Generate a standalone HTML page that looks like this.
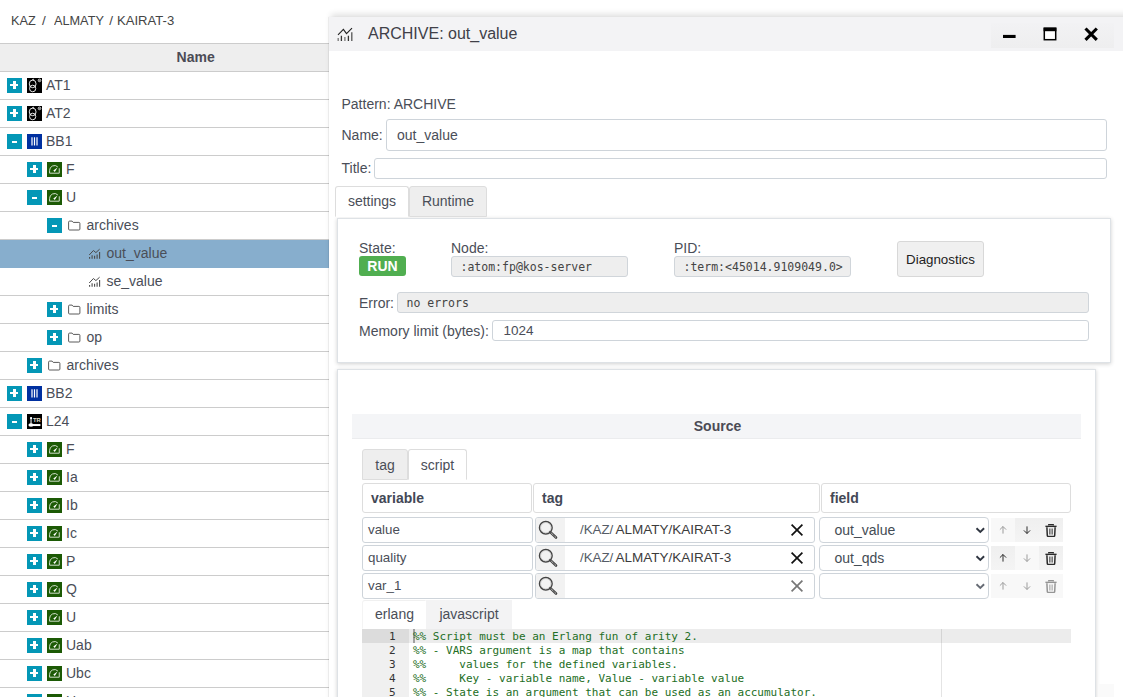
<!DOCTYPE html>
<html lang="en">
<head>
<meta charset="utf-8">
<title>ARCHIVE: out_value</title>
<style>
*{box-sizing:border-box;margin:0;padding:0}
html,body{width:1123px;height:697px;overflow:hidden;background:#fff}
body{font-family:"Liberation Sans",sans-serif;font-size:14px;color:#4a4e58;position:relative}
.abs{position:absolute}
/* ---------- left tree ---------- */
#crumbs{left:0;top:12px;height:18px;line-height:18px;font-size:13.5px;color:#444;white-space:pre}
#crumbs span{position:absolute;top:0;transform-origin:0 50%;display:block}
#thead{left:0;top:43px;width:329px;height:29px;border-top:1px solid #ccc;border-bottom:1px solid #ccc;background:#eee;font-weight:bold;line-height:27px;color:#4b4b55}
#thead span{position:absolute;left:176.6px}
#tree{left:0;top:72px;width:329px}
.row{position:relative;height:28px;border-bottom:1px solid #ccc;line-height:27px;white-space:nowrap}
.row.sel{background:#87aecd;border-bottom-color:#87aecd}
.row .pm{position:absolute;top:6px;width:15px;height:15px;background:#0497b6}
.row .pm:before{content:"";position:absolute;background:#fff}
.row .pm:after{content:"";position:absolute;background:#fff}
.row .pm.plus:before{left:3.1px;top:6px;width:8.2px;height:2.3px}
.row .pm.plus:after{left:6px;top:3px;width:2.6px;height:8.2px}
.row .pm.minus:before{left:5.1px;top:6.9px;width:4.7px;height:2.1px}
.row .ic{position:absolute;top:6px;width:15px;height:15px}
.row .tx{position:absolute;top:0}
/* ---------- window ---------- */
#win{left:329px;top:17px;width:800px;height:700px;background:#fff;box-shadow:-1.5px 0 1px rgba(0,0,0,.11),2px -3px 6px rgba(0,0,0,.12)}
#wc{left:-329px;top:-17px;width:0;height:0}
#tbar{left:329px;top:17px;width:800px;height:34px;background:#f3f3f5}
#ttl{left:368px;top:24px;font-size:16px;line-height:20px;color:#404048;white-space:nowrap}
#tbtn{left:991px;top:23px;width:123px;height:25px;background:linear-gradient(#f2f2f4,#eeeeef)}
.lab{line-height:18px;white-space:nowrap}
.inp{border:1px solid #ced4da;border-radius:3px;background:#fff;white-space:nowrap;overflow:hidden}
.inp.ro{background:#eee;border-color:#d0d5da;color:#444}
.mono{font-family:"DejaVu Sans Mono","Liberation Mono",monospace}
.tab{height:31px;line-height:28px;text-align:center;border:1px solid #ddd;border-radius:3px 3px 0 0}
.tab.off{background:#eee;border-color:#ddd}
.tab.on{background:#fff;border-bottom-color:#fff}
.panel{background:#fff;border:1px solid #dee2e6;box-shadow:0 1px 4px rgba(0,0,0,.19)}
.hcell{border:1px solid #ddd;border-radius:3px;font-weight:bold;line-height:28px;padding-left:8px;height:30px;color:#434856}
.sbtn{width:23px;height:22px;background:#f2f2f2}
.sbtn.hl{background:#ececec}
.cl{font-size:11px;line-height:14px;height:14px}
.tagtx{font-size:13.5px;color:#3c3c3c;white-space:pre}
</style>
</head>
<body>
<div id="crumbs" class="abs"><span style="left:11px;transform:scaleX(.942)">KAZ</span><span style="left:42px">/</span><span style="left:53.5px;transform:scaleX(.941)">ALMATY</span><span style="left:109.3px">/</span><span style="left:117px;transform:scaleX(.969)">KAIRAT-3</span></div>
<div id="thead" class="abs"><span>Name</span></div>
<div id="tree" class="abs">
<div class="row"><span class="pm plus" style="left:7px"></span><svg class="ic" style="left:27px" viewBox="0 0 15 15"><rect width="15" height="15" fill="#000"/><g fill="none" stroke="#fff" stroke-width="0.9"><ellipse cx="5.65" cy="5.9" rx="3.4" ry="3.8"/><ellipse cx="5.65" cy="10.5" rx="3.1" ry="3.3"/><path d="M5 2.2L6.3 1L6.9 2.2" stroke-width="0.7"/><circle cx="12.5" cy="2.4" r="1.3" stroke-width="0.8"/><circle cx="12.5" cy="2.4" r="0.3" stroke-width="0.6"/></g></svg><span class="tx" style="left:46px">AT1</span></div>
<div class="row"><span class="pm plus" style="left:7px"></span><svg class="ic" style="left:27px" viewBox="0 0 15 15"><rect width="15" height="15" fill="#000"/><g fill="none" stroke="#fff" stroke-width="0.9"><ellipse cx="5.65" cy="5.9" rx="3.4" ry="3.8"/><ellipse cx="5.65" cy="10.5" rx="3.1" ry="3.3"/><path d="M5 2.2L6.3 1L6.9 2.2" stroke-width="0.7"/><circle cx="12.5" cy="2.4" r="1.3" stroke-width="0.8"/><circle cx="12.5" cy="2.4" r="0.3" stroke-width="0.6"/></g></svg><span class="tx" style="left:46px">AT2</span></div>
<div class="row"><span class="pm minus" style="left:7px"></span><svg class="ic" style="left:27px" viewBox="0 0 15 15"><rect width="15" height="15" fill="#0030a0"/><g stroke="#fff" stroke-width="1.2"><path d="M5 3.2v8.3M7.5 3.2v8.3M10 3.2v8.3"/></g></svg><span class="tx" style="left:46px">BB1</span></div>
<div class="row"><span class="pm plus" style="left:27px"></span><svg class="ic" style="left:47px" viewBox="0 0 15 15"><rect width="15" height="15" fill="#1c5a05"/><path d="M2.6 11.2V8.4A4.85 4.85 0 0 1 10.8 4.9M12.25 6.3V11.2H2.6" fill="none" stroke="#dbe6d6" stroke-width="0.95"/><path d="M6.3 8.5L7.8 9.9L10.5 5.6z" fill="#fff"/></svg><span class="tx" style="left:66px">F</span></div>
<div class="row"><span class="pm minus" style="left:27px"></span><svg class="ic" style="left:47px" viewBox="0 0 15 15"><rect width="15" height="15" fill="#1c5a05"/><path d="M2.6 11.2V8.4A4.85 4.85 0 0 1 10.8 4.9M12.25 6.3V11.2H2.6" fill="none" stroke="#dbe6d6" stroke-width="0.95"/><path d="M6.3 8.5L7.8 9.9L10.5 5.6z" fill="#fff"/></svg><span class="tx" style="left:66px">U</span></div>
<div class="row"><span class="pm minus" style="left:47px"></span><svg class="ic" style="left:67px" viewBox="0 0 15 15"><path d="M1.6 4.1q0-1 1-1h2.5l1.1 1.3h5.7q1 0 1 1v5.6q0 1-1 1H2.6q-1 0-1-1z" fill="none" stroke="#5a5a5a" stroke-width="1"/></svg><span class="tx" style="left:86.5px">archives</span></div>
<div class="row sel"><svg class="ic" style="left:87px;" viewBox="0 0 15 15"><g fill="none" stroke="#4a4a4a"><path d="M2.2 9L6.4 4.5L8.9 6.6L12.6 3.2" stroke-width="1"/><path d="M2.6 11v1.8M5.1 9.2v3.6M7.6 9.8v3M10.1 8.5v4.3M12.6 6v6.8" stroke-width="1.1"/></g></svg><span class="tx" style="left:106.5px">out_value</span></div>
<div class="row"><svg class="ic" style="left:87px;" viewBox="0 0 15 15"><g fill="none" stroke="#4a4a4a"><path d="M2.2 9L6.4 4.5L8.9 6.6L12.6 3.2" stroke-width="1"/><path d="M2.6 11v1.8M5.1 9.2v3.6M7.6 9.8v3M10.1 8.5v4.3M12.6 6v6.8" stroke-width="1.1"/></g></svg><span class="tx" style="left:106.5px">se_value</span></div>
<div class="row"><span class="pm plus" style="left:47px"></span><svg class="ic" style="left:67px" viewBox="0 0 15 15"><path d="M1.6 4.1q0-1 1-1h2.5l1.1 1.3h5.7q1 0 1 1v5.6q0 1-1 1H2.6q-1 0-1-1z" fill="none" stroke="#5a5a5a" stroke-width="1"/></svg><span class="tx" style="left:86.5px">limits</span></div>
<div class="row"><span class="pm plus" style="left:47px"></span><svg class="ic" style="left:67px" viewBox="0 0 15 15"><path d="M1.6 4.1q0-1 1-1h2.5l1.1 1.3h5.7q1 0 1 1v5.6q0 1-1 1H2.6q-1 0-1-1z" fill="none" stroke="#5a5a5a" stroke-width="1"/></svg><span class="tx" style="left:86.5px">op</span></div>
<div class="row"><span class="pm plus" style="left:27px"></span><svg class="ic" style="left:47px" viewBox="0 0 15 15"><path d="M1.6 4.1q0-1 1-1h2.5l1.1 1.3h5.7q1 0 1 1v5.6q0 1-1 1H2.6q-1 0-1-1z" fill="none" stroke="#5a5a5a" stroke-width="1"/></svg><span class="tx" style="left:66.5px">archives</span></div>
<div class="row"><span class="pm plus" style="left:7px"></span><svg class="ic" style="left:27px" viewBox="0 0 15 15"><rect width="15" height="15" fill="#0030a0"/><g stroke="#fff" stroke-width="1.2"><path d="M5 3.2v8.3M7.5 3.2v8.3M10 3.2v8.3"/></g></svg><span class="tx" style="left:46px">BB2</span></div>
<div class="row"><span class="pm minus" style="left:7px"></span><svg class="ic" style="left:27px" viewBox="0 0 15 15"><rect width="15" height="15" fill="#000"/><path d="M4.05 4.2v6" stroke="#bbb" stroke-width="1.4" fill="none"/><rect x="3.1" y="3.1" width="1.9" height="1.9" fill="#fff"/><path d="M2.2 11.05H13.4" stroke="#fff" stroke-width="2" fill="none"/><ellipse cx="4" cy="11.1" rx="2.6" ry="1.75" fill="#fff"/><text x="5.9" y="8.2" font-family="Liberation Sans,sans-serif" font-weight="bold" font-size="5.8" fill="#e8e0d0">TR</text></svg><span class="tx" style="left:46px">L24</span></div>
<div class="row"><span class="pm plus" style="left:27px"></span><svg class="ic" style="left:47px" viewBox="0 0 15 15"><rect width="15" height="15" fill="#1c5a05"/><path d="M2.6 11.2V8.4A4.85 4.85 0 0 1 10.8 4.9M12.25 6.3V11.2H2.6" fill="none" stroke="#dbe6d6" stroke-width="0.95"/><path d="M6.3 8.5L7.8 9.9L10.5 5.6z" fill="#fff"/></svg><span class="tx" style="left:66px">F</span></div>
<div class="row"><span class="pm plus" style="left:27px"></span><svg class="ic" style="left:47px" viewBox="0 0 15 15"><rect width="15" height="15" fill="#1c5a05"/><path d="M2.6 11.2V8.4A4.85 4.85 0 0 1 10.8 4.9M12.25 6.3V11.2H2.6" fill="none" stroke="#dbe6d6" stroke-width="0.95"/><path d="M6.3 8.5L7.8 9.9L10.5 5.6z" fill="#fff"/></svg><span class="tx" style="left:66px">Ia</span></div>
<div class="row"><span class="pm plus" style="left:27px"></span><svg class="ic" style="left:47px" viewBox="0 0 15 15"><rect width="15" height="15" fill="#1c5a05"/><path d="M2.6 11.2V8.4A4.85 4.85 0 0 1 10.8 4.9M12.25 6.3V11.2H2.6" fill="none" stroke="#dbe6d6" stroke-width="0.95"/><path d="M6.3 8.5L7.8 9.9L10.5 5.6z" fill="#fff"/></svg><span class="tx" style="left:66px">Ib</span></div>
<div class="row"><span class="pm plus" style="left:27px"></span><svg class="ic" style="left:47px" viewBox="0 0 15 15"><rect width="15" height="15" fill="#1c5a05"/><path d="M2.6 11.2V8.4A4.85 4.85 0 0 1 10.8 4.9M12.25 6.3V11.2H2.6" fill="none" stroke="#dbe6d6" stroke-width="0.95"/><path d="M6.3 8.5L7.8 9.9L10.5 5.6z" fill="#fff"/></svg><span class="tx" style="left:66px">Ic</span></div>
<div class="row"><span class="pm plus" style="left:27px"></span><svg class="ic" style="left:47px" viewBox="0 0 15 15"><rect width="15" height="15" fill="#1c5a05"/><path d="M2.6 11.2V8.4A4.85 4.85 0 0 1 10.8 4.9M12.25 6.3V11.2H2.6" fill="none" stroke="#dbe6d6" stroke-width="0.95"/><path d="M6.3 8.5L7.8 9.9L10.5 5.6z" fill="#fff"/></svg><span class="tx" style="left:66px">P</span></div>
<div class="row"><span class="pm plus" style="left:27px"></span><svg class="ic" style="left:47px" viewBox="0 0 15 15"><rect width="15" height="15" fill="#1c5a05"/><path d="M2.6 11.2V8.4A4.85 4.85 0 0 1 10.8 4.9M12.25 6.3V11.2H2.6" fill="none" stroke="#dbe6d6" stroke-width="0.95"/><path d="M6.3 8.5L7.8 9.9L10.5 5.6z" fill="#fff"/></svg><span class="tx" style="left:66px">Q</span></div>
<div class="row"><span class="pm plus" style="left:27px"></span><svg class="ic" style="left:47px" viewBox="0 0 15 15"><rect width="15" height="15" fill="#1c5a05"/><path d="M2.6 11.2V8.4A4.85 4.85 0 0 1 10.8 4.9M12.25 6.3V11.2H2.6" fill="none" stroke="#dbe6d6" stroke-width="0.95"/><path d="M6.3 8.5L7.8 9.9L10.5 5.6z" fill="#fff"/></svg><span class="tx" style="left:66px">U</span></div>
<div class="row"><span class="pm plus" style="left:27px"></span><svg class="ic" style="left:47px" viewBox="0 0 15 15"><rect width="15" height="15" fill="#1c5a05"/><path d="M2.6 11.2V8.4A4.85 4.85 0 0 1 10.8 4.9M12.25 6.3V11.2H2.6" fill="none" stroke="#dbe6d6" stroke-width="0.95"/><path d="M6.3 8.5L7.8 9.9L10.5 5.6z" fill="#fff"/></svg><span class="tx" style="left:66px">Uab</span></div>
<div class="row"><span class="pm plus" style="left:27px"></span><svg class="ic" style="left:47px" viewBox="0 0 15 15"><rect width="15" height="15" fill="#1c5a05"/><path d="M2.6 11.2V8.4A4.85 4.85 0 0 1 10.8 4.9M12.25 6.3V11.2H2.6" fill="none" stroke="#dbe6d6" stroke-width="0.95"/><path d="M6.3 8.5L7.8 9.9L10.5 5.6z" fill="#fff"/></svg><span class="tx" style="left:66px">Ubc</span></div>
<div class="row"><span class="pm plus" style="left:27px"></span><svg class="ic" style="left:47px" viewBox="0 0 15 15"><rect width="15" height="15" fill="#1c5a05"/><path d="M2.6 11.2V8.4A4.85 4.85 0 0 1 10.8 4.9M12.25 6.3V11.2H2.6" fill="none" stroke="#dbe6d6" stroke-width="0.95"/><path d="M6.3 8.5L7.8 9.9L10.5 5.6z" fill="#fff"/></svg><span class="tx" style="left:66px">Uca</span></div>
</div>
<div id="win" class="abs"><div id="wc" class="abs">
<div id="tbar" class="abs"></div>
<div class="abs" style="left:329px;top:16px;width:30px;height:35px"><svg class="abs" style="left:7px;top:10px;width:18px;height:16px" viewBox="0 0 18 16"><path d="M2 8.9L7.4 3.4L10.5 7.6L16 2.2" fill="none" stroke="#222" stroke-width="1.1"/><g fill="none" stroke-width="1.3"><path d="M2.2 12v2.9M8.9 11.1v3.8" stroke="#777"/><path d="M5.4 9.8v5.1M12.4 9.8v5.1" stroke="#333"/><path d="M15.8 6.2v8.7" stroke="#555"/></g></svg></div>
<div id="ttl" class="abs">ARCHIVE: out_value</div>
<div id="tbtn" class="abs"></div>
<svg class="abs" style="left:1000px;top:24px;width:104px;height:22px" viewBox="0 0 104 22">
<rect x="3" y="10.9" width="12.6" height="3.1" fill="#000"/>
<rect x="44.3" y="4.3" width="11.4" height="11.4" fill="#fff" stroke="#000" stroke-width="1.5"/><rect x="43.6" y="3.6" width="12.8" height="3.6" fill="#000"/>
<path d="M85.5 4.5L96.8 15.8M96.8 4.5L85.5 15.8" stroke="#000" stroke-width="3.1" fill="none"/>
</svg>

<div class="abs lab" style="left:341.5px;top:95px">Pattern: ARCHIVE</div>
<div class="abs lab" style="left:341.5px;top:126px">Name:</div>
<div class="abs inp" style="left:386px;top:119px;width:721px;height:32px;line-height:30px;padding-left:10px">out_value</div>
<div class="abs lab" style="left:341.5px;top:159px">Title:</div>
<div class="abs inp" style="left:374px;top:158px;width:733px;height:21px"></div>

<div class="abs panel" style="left:337px;top:218px;width:774px;height:145px"></div>
<div class="abs tab on" style="left:335px;top:186px;width:74px;height:31px">settings</div>
<div class="abs tab off" style="left:409px;top:186px;width:78px;height:31px">Runtime</div>

<div class="abs lab" style="left:359px;top:239px">State:</div>
<div class="abs" style="left:359px;top:256px;width:47px;height:20px;background:#50ae50;border-radius:3px;color:#fff;font-weight:bold;line-height:21px;text-align:center;font-size:14px">RUN</div>
<div class="abs lab" style="left:451px;top:239px">Node:</div>
<div class="abs inp ro mono" style="left:451px;top:256px;width:177px;height:21px;line-height:20px;font-size:11.5px;padding-left:8.5px">:atom:fp@kos-server</div>
<div class="abs lab" style="left:674px;top:239px">PID:</div>
<div class="abs inp ro mono" style="left:674px;top:256px;width:177px;height:21px;line-height:20px;font-size:11.5px;padding-left:8.5px">:term:&lt;45014.9109049.0&gt;</div>
<div class="abs" style="left:897px;top:241px;width:87px;height:36px;border:1px solid #d8d8d8;border-radius:3px;background:#f0f0f0;line-height:35px;text-align:center;color:#222;font-size:13.33px">Diagnostics</div>
<div class="abs lab" style="left:359px;top:294px">Error:</div>
<div class="abs inp ro mono" style="left:397px;top:292px;width:692px;height:21px;line-height:20px;font-size:11.5px;padding-left:8.5px">no errors</div>
<div class="abs lab" style="left:359px;top:322px">Memory limit (bytes):</div>
<div class="abs inp" style="left:492px;top:320px;width:597px;height:21px;line-height:19px;font-size:13.5px;padding-left:10.5px">1024</div>

<div class="abs panel" style="left:337px;top:369px;width:759px;height:400px"></div>
<div class="abs" style="left:1098px;top:684px;width:16px;height:20px;background:#fafafa"></div>
<div class="abs" style="left:352px;top:414px;width:729px;height:25px;background:#f4f5f7;border-bottom:1px solid #ebecee;text-align:center;font-weight:bold;line-height:24px;color:#4b4b55;padding-left:2px">Source</div>
<div class="abs tab off" style="left:362px;top:449px;width:46px;height:31px;line-height:30px">tag</div>
<div class="abs tab on" style="left:408px;top:449px;width:59px;height:31px;line-height:30px">script</div>
<div class="abs hcell" style="left:362px;top:483px;width:170px">variable</div>
<div class="abs hcell" style="left:533px;top:483px;width:287px">tag</div>
<div class="abs hcell" style="left:821px;top:483px;width:250px">field</div>
<div class="abs inp" style="left:362px;top:517px;width:171px;height:26px;line-height:24px;padding-left:5px;font-size:13.33px">value</div>
<div class="abs inp" style="left:535px;top:517px;width:280px;height:26px;line-height:24px"><span class="abs" style="left:0;top:0;width:29px;height:24px;background:#f2f2f2"></span><span class="abs tagtx" style="left:44px;top:0;font-size:13.33px;color:#555c66">/KAZ/</span><span class="abs tagtx" style="left:79.5px;top:0">ALMATY/KAIRAT-3</span></div>
<svg class="abs" style="left:537px;top:518px;width:22px;height:22px" viewBox="0 0 22 22"><circle cx="8.8" cy="9.7" r="6.3" fill="none" stroke="#444" stroke-width="1.5"/><circle cx="8.8" cy="9.7" r="5.2" fill="none" stroke="#c8c8c8" stroke-width="0.8"/><path d="M13.3 14.1L19 19.5" stroke="#444" stroke-width="2.6" stroke-linecap="round"/><path d="M13.9 14.7L18.9 19.4" stroke="#fff" stroke-width="0.9" stroke-dasharray="1 0.9"/></svg>
<svg class="abs" style="left:790px;top:523px;width:14px;height:14px" viewBox="0 0 14 14"><path d="M1.6 1.6L12.4 12.4M12.4 1.6L1.6 12.4" stroke="#111" stroke-width="1.7" fill="none"/></svg>
<div class="abs inp" style="left:819px;top:517px;width:170px;height:26px;line-height:24px;padding-left:14.5px;border-radius:4px;color:#444c55">out_value</div>
<svg class="abs" style="left:974.8px;top:526.6px;width:11px;height:7px" viewBox="0 0 11 7"><path d="M1.5 1.3L5.3 5L9.1 1.3" stroke="#2f3540" stroke-width="1.9" fill="none"/></svg>
<div class="abs" style="left:991px;top:518px;width:24px;height:24px;background:#f8f8f8"></div>
<div class="abs" style="left:1015px;top:518px;width:24px;height:24px;background:linear-gradient(#efefef,#f4f4f4)"></div>
<div class="abs" style="left:1039px;top:518px;width:24px;height:24px;background:linear-gradient(#efefef,#f4f4f4)"></div>
<svg class="abs" style="left:998.3px;top:525.2px;width:10px;height:10px" viewBox="0 0 10 10"><path d="M5 8.6V1.5M1.9 4.6L5 1.5L8.1 4.6" stroke="#989898" stroke-width="0.95" fill="none"/></svg>
<svg class="abs" style="left:1022.3px;top:524.8px;width:10px;height:10px" viewBox="0 0 10 10"><path d="M5 1.4V8.5M1.9 5.4L5 8.5L8.1 5.4" stroke="#222" stroke-width="0.95" fill="none"/></svg>
<svg class="abs" style="left:1045.1px;top:523.5px;width:12px;height:13.2px" viewBox="0 0 12 14" preserveAspectRatio="none"><g fill="none" stroke="#2a2a2a"><path d="M3.7 1.7V0.7H8.3V1.7" stroke-width="1.2"/><path d="M0.4 2.5H11.6" stroke-width="1.5"/><path d="M1.9 3.4L2.3 12.2Q2.35 13.2 3.4 13.2H8.6Q9.65 13.2 9.7 12.2L10.1 3.4" stroke-width="1.5"/><path d="M4.6 4.8V11.2M6 4.8V11.2M7.4 4.8V11.2" stroke="#555" stroke-width="0.9"/></g></svg>
<div class="abs inp" style="left:362px;top:545px;width:171px;height:26px;line-height:24px;padding-left:5px;font-size:13.33px">quality</div>
<div class="abs inp" style="left:535px;top:545px;width:280px;height:26px;line-height:24px"><span class="abs" style="left:0;top:0;width:29px;height:24px;background:#f2f2f2"></span><span class="abs tagtx" style="left:44px;top:0;font-size:13.33px;color:#555c66">/KAZ/</span><span class="abs tagtx" style="left:79.5px;top:0">ALMATY/KAIRAT-3</span></div>
<svg class="abs" style="left:537px;top:546px;width:22px;height:22px" viewBox="0 0 22 22"><circle cx="8.8" cy="9.7" r="6.3" fill="none" stroke="#444" stroke-width="1.5"/><circle cx="8.8" cy="9.7" r="5.2" fill="none" stroke="#c8c8c8" stroke-width="0.8"/><path d="M13.3 14.1L19 19.5" stroke="#444" stroke-width="2.6" stroke-linecap="round"/><path d="M13.9 14.7L18.9 19.4" stroke="#fff" stroke-width="0.9" stroke-dasharray="1 0.9"/></svg>
<svg class="abs" style="left:790px;top:551px;width:14px;height:14px" viewBox="0 0 14 14"><path d="M1.6 1.6L12.4 12.4M12.4 1.6L1.6 12.4" stroke="#111" stroke-width="1.7" fill="none"/></svg>
<div class="abs inp" style="left:819px;top:545px;width:170px;height:26px;line-height:24px;padding-left:14.5px;border-radius:4px;color:#444c55">out_qds</div>
<svg class="abs" style="left:974.8px;top:554.6px;width:11px;height:7px" viewBox="0 0 11 7"><path d="M1.5 1.3L5.3 5L9.1 1.3" stroke="#2f3540" stroke-width="1.9" fill="none"/></svg>
<div class="abs" style="left:991px;top:546px;width:24px;height:24px;background:linear-gradient(#efefef,#f4f4f4)"></div>
<div class="abs" style="left:1015px;top:546px;width:24px;height:24px;background:#f8f8f8"></div>
<div class="abs" style="left:1039px;top:546px;width:24px;height:24px;background:linear-gradient(#efefef,#f4f4f4)"></div>
<svg class="abs" style="left:998.3px;top:553.2px;width:10px;height:10px" viewBox="0 0 10 10"><path d="M5 8.6V1.5M1.9 4.6L5 1.5L8.1 4.6" stroke="#222" stroke-width="0.95" fill="none"/></svg>
<svg class="abs" style="left:1022.3px;top:552.8px;width:10px;height:10px" viewBox="0 0 10 10"><path d="M5 1.4V8.5M1.9 5.4L5 8.5L8.1 5.4" stroke="#989898" stroke-width="0.95" fill="none"/></svg>
<svg class="abs" style="left:1045.1px;top:551.5px;width:12px;height:13.2px" viewBox="0 0 12 14" preserveAspectRatio="none"><g fill="none" stroke="#2a2a2a"><path d="M3.7 1.7V0.7H8.3V1.7" stroke-width="1.2"/><path d="M0.4 2.5H11.6" stroke-width="1.5"/><path d="M1.9 3.4L2.3 12.2Q2.35 13.2 3.4 13.2H8.6Q9.65 13.2 9.7 12.2L10.1 3.4" stroke-width="1.5"/><path d="M4.6 4.8V11.2M6 4.8V11.2M7.4 4.8V11.2" stroke="#555" stroke-width="0.9"/></g></svg>
<div class="abs inp" style="left:362px;top:573px;width:171px;height:26px;line-height:24px;padding-left:5px;font-size:13.33px">var_1</div>
<div class="abs inp" style="left:535px;top:573px;width:280px;height:26px;line-height:24px"><span class="abs" style="left:0;top:0;width:29px;height:24px;background:#f2f2f2"></span></div>
<svg class="abs" style="left:537px;top:574px;width:22px;height:22px" viewBox="0 0 22 22"><circle cx="8.8" cy="9.7" r="6.3" fill="none" stroke="#444" stroke-width="1.5"/><circle cx="8.8" cy="9.7" r="5.2" fill="none" stroke="#c8c8c8" stroke-width="0.8"/><path d="M13.3 14.1L19 19.5" stroke="#444" stroke-width="2.6" stroke-linecap="round"/><path d="M13.9 14.7L18.9 19.4" stroke="#fff" stroke-width="0.9" stroke-dasharray="1 0.9"/></svg>
<svg class="abs" style="left:790px;top:579px;width:14px;height:14px" viewBox="0 0 14 14"><path d="M1.6 1.6L12.4 12.4M12.4 1.6L1.6 12.4" stroke="#777" stroke-width="1.7" fill="none"/></svg>
<div class="abs inp" style="left:819px;top:573px;width:170px;height:26px;line-height:24px;padding-left:14.5px;border-radius:4px;color:#444c55"></div>
<svg class="abs" style="left:974.8px;top:582.6px;width:11px;height:7px" viewBox="0 0 11 7"><path d="M1.5 1.3L5.3 5L9.1 1.3" stroke="#666b74" stroke-width="1.9" fill="none"/></svg>
<div class="abs" style="left:991px;top:574px;width:24px;height:24px;background:#f8f8f8"></div>
<div class="abs" style="left:1015px;top:574px;width:24px;height:24px;background:#f8f8f8"></div>
<div class="abs" style="left:1039px;top:574px;width:24px;height:24px;background:#f8f8f8"></div>
<svg class="abs" style="left:998.3px;top:581.2px;width:10px;height:10px" viewBox="0 0 10 10"><path d="M5 8.6V1.5M1.9 4.6L5 1.5L8.1 4.6" stroke="#989898" stroke-width="0.95" fill="none"/></svg>
<svg class="abs" style="left:1022.3px;top:580.8px;width:10px;height:10px" viewBox="0 0 10 10"><path d="M5 1.4V8.5M1.9 5.4L5 8.5L8.1 5.4" stroke="#989898" stroke-width="0.95" fill="none"/></svg>
<svg class="abs" style="left:1045.1px;top:579.5px;width:12px;height:13.2px" viewBox="0 0 12 14" preserveAspectRatio="none"><g fill="none" stroke="#959595"><path d="M3.7 1.7V0.7H8.3V1.7" stroke-width="1.2"/><path d="M0.4 2.5H11.6" stroke-width="1.5"/><path d="M1.9 3.4L2.3 12.2Q2.35 13.2 3.4 13.2H8.6Q9.65 13.2 9.7 12.2L10.1 3.4" stroke-width="1.5"/><path d="M4.6 4.8V11.2M6 4.8V11.2M7.4 4.8V11.2" stroke="#b0b0b0" stroke-width="0.9"/></g></svg>
<div class="abs tab on" style="left:362px;top:600px;width:64px;height:29px;line-height:27px;border-color:#f0f0f0 transparent transparent #f4f4f4;border-radius:3px 0 0 0;padding-left:1px">erlang</div>
<div class="abs tab off" style="left:426px;top:600px;width:86px;height:29px;line-height:27px;background:#f3f3f4;border-color:#f3f3f4;border-radius:0">javascript</div>
<div class="abs" style="left:362px;top:629px;width:709px;height:80px;background:#fff"></div>
<div class="abs" style="left:362px;top:629px;width:47px;height:80px;background:#f0f0f0"></div>
<div class="abs" style="left:409px;top:629px;width:662px;height:14px;background:#ececec"></div>
<div class="abs" style="left:362px;top:629px;width:47px;height:14px;background:#dcdcdc"></div>
<div class="abs" style="left:941px;top:629px;width:1px;height:80px;background:#e4e4e4"></div>
<div class="abs" style="left:941px;top:629px;width:1px;height:14px;background:#d4d4d4"></div>
<div class="abs" style="left:413px;top:629px;width:1.5px;height:14px;background:#a0a0a0"></div>
<div class="abs mono cl" style="left:362px;top:630px;width:33.5px;text-align:right;color:#333">1</div>
<div class="abs mono cl" style="left:413px;top:630px;color:#236e24;white-space:pre">%% Script must be an Erlang fun of arity 2.</div>
<div class="abs mono cl" style="left:362px;top:644px;width:33.5px;text-align:right;color:#333">2</div>
<div class="abs mono cl" style="left:413px;top:644px;color:#236e24;white-space:pre">%% - VARS argument is a map that contains</div>
<div class="abs mono cl" style="left:362px;top:658px;width:33.5px;text-align:right;color:#333">3</div>
<div class="abs mono cl" style="left:413px;top:658px;color:#236e24;white-space:pre">%%     values for the defined variables.</div>
<div class="abs mono cl" style="left:362px;top:672px;width:33.5px;text-align:right;color:#333">4</div>
<div class="abs mono cl" style="left:413px;top:672px;color:#236e24;white-space:pre">%%     Key - variable name, Value - variable value</div>
<div class="abs mono cl" style="left:362px;top:686px;width:33.5px;text-align:right;color:#333">5</div>
<div class="abs mono cl" style="left:413px;top:686px;color:#236e24;white-space:pre">%% - State is an argument that can be used as an accumulator.</div>
</div></div>
</body>
</html>
